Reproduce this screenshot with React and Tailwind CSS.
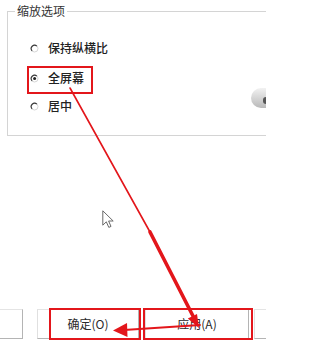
import React from "react";

const FONT = { fontFamily: '"Noto Sans CJK SC", "Noto Sans", sans-serif' };

function Radio({ checked }) {
  // classic win radio: dark arc top-left, pale bottom-right
  return (
    <svg width="9" height="9" viewBox="0 0 9 9" className="shrink-0">
      <circle cx="4.5" cy="4.5" r="3.5" fill="#fff" stroke="#d6d6d6" strokeWidth="1" />
      <path d="M2.1 6.9 A3.4 3.4 0 0 1 6.9 2.1" fill="none" stroke="#3a3a3a" strokeWidth="1.1" />
      {checked && <circle cx="4.6" cy="4.6" r="1.5" fill="#222" />}
    </svg>
  );
}

function Option({ label, checked, boxed, className = "" }) {
  return (
    <div
      className={`flex items-center h-[28px] w-[66px] border-2 pl-[1px] pb-[4px] ${
        boxed ? "border-[#e3161b]" : "border-transparent"
      } ${className}`}
    >
      <Radio checked={checked} />
      <span className="ml-[9px] whitespace-nowrap text-[12px] leading-[12px] font-medium text-[#222]">{label}</span>
    </div>
  );
}

function Btn({ label, className = "" }) {
  return (
    <div
      className={`flex h-[30px] shrink-0 items-center justify-center border border-[#b4b4b4] border-t-[#e4e4e4] border-l-[#e0e0e0] bg-white text-[12px] text-[#2a2a2a] ${className}`}
    >
      {label}
    </div>
  );
}

export default function App() {
  return (
    <div className="relative flex h-[347px] w-[266px] flex-col overflow-hidden bg-white" style={FONT}>
      {/* group box runs off the right edge, so no right border */}
      <div className="relative ml-[7px] mt-[11px] flex w-[259px] shrink-0 flex-col border-y border-l border-[#d4d4d4] pb-[13px] pl-[19px]">
        <span className="-ml-[12px] -mt-[7px] self-start bg-white px-[2px] text-[12px] leading-[12px] text-[#333]">缩放选项</span>
        <Option label="保持纵横比" className="mt-[19px]" />
        <Option label="全屏幕" checked boxed className="mt-[2px]" />
        <Option label="居中" />
        {/* partly hidden control on the right edge */}
        <div className="absolute right-0 top-[76px] flex h-[20px] w-[15px] items-center justify-end rounded-l-full bg-linear-to-b from-[#f2f2f2] to-[#b9b9b9]">
          <div className="mt-[4px] h-[7px] w-[3px] rounded-l-full bg-[#555]" />
        </div>
      </div>

      <div className="mt-[173px] flex items-start">
        <Btn label="" className="w-[23px] border-l-0" />
        <Btn label="确定(O)" className="ml-[14px] w-[102px]" />
        <Btn label="应用(A)" className="ml-[6px] w-[104px]" />
        <Btn label="" className="ml-[5px] w-[12px] border-r-0" />
      </div>

      {/* mouse pointer */}
      <svg className="absolute left-[102px] top-[210px]" width="13" height="19" viewBox="0 0 13 19">
        <path d="M0.8 0.8 L0.8 15.2 L4.3 11.8 L6.8 17.4 L9 16.4 L6.6 11 L11.2 11 Z" fill="#fff" stroke="#6a6a6a" strokeWidth="1" strokeLinejoin="round" />
      </svg>

      {/* red annotations */}
      <svg className="pointer-events-none absolute inset-0" width="266" height="347" viewBox="0 0 266 347">
        <g fill="none" stroke="#e3161b" strokeLinecap="round">
          <line x1="70" y1="88" x2="150" y2="232" strokeWidth="1.6" />
          <line x1="150" y1="232" x2="193" y2="316" strokeWidth="3.6" />
          <line x1="200" y1="325" x2="124" y2="330" strokeWidth="1.8" />
          <rect x="50" y="309" width="90" height="30" strokeWidth="2" />
          <rect x="144" y="309" width="108" height="30" strokeWidth="2" />
        </g>
        <polygon points="199,328 187.8,318.5 197,314" fill="#e3161b" />
        <polygon points="113,330.5 127,323 127.5,337" fill="#e3161b" />
      </svg>
    </div>
  );
}
